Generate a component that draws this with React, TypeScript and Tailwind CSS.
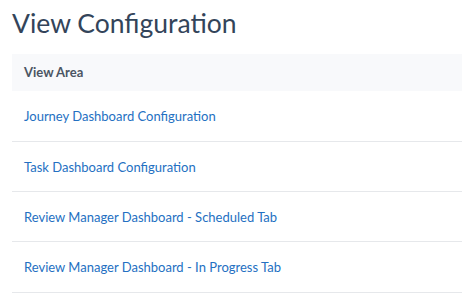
const rows = [
  "Journey Dashboard Configuration",
  "Task Dashboard Configuration",
  "Review Manager Dashboard - Scheduled Tab",
  "Review Manager Dashboard - In Progress Tab",
];

export default function App() {
  return (
    <div className="min-h-screen bg-white pl-3 font-['Lato',sans-serif]">
      <h1 className="pt-[6px] text-[26.5px] leading-[34px] text-[#33445a]">View Configuration</h1>
      <table className="mt-[14px] w-full border-collapse">
        <thead>
          <tr className="bg-[#f8f9fb]">
            <th className="h-[37px] px-3 text-left text-[13px] font-bold text-[#4b5563]">View Area</th>
          </tr>
        </thead>
        <tbody>
          {rows.map((r) => (
            <tr key={r} className="border-b border-[#e6e8eb]">
              <td className="h-[50.3px] px-3 pt-[2px] text-[13px] text-[#2470c2]">{r}</td>
            </tr>
          ))}
        </tbody>
      </table>
    </div>
  );
}
